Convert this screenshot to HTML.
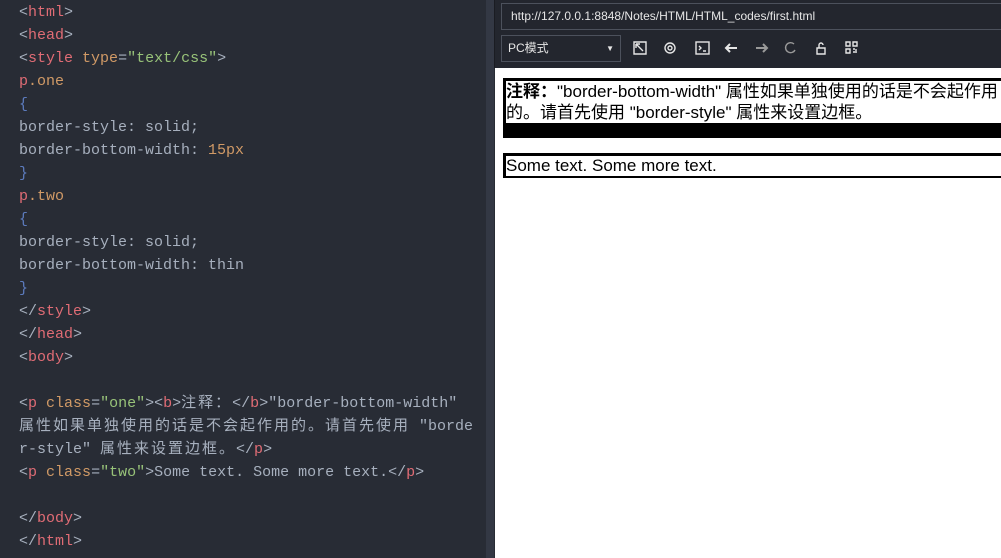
<!DOCTYPE html>
<html><head><meta charset="utf-8"><style>
*{margin:0;padding:0;box-sizing:border-box}
body{width:1001px;height:558px;overflow:hidden;background:#282c34;position:relative;font-family:"Liberation Sans","Noto Sans CJK SC",sans-serif}
#ed{position:absolute;left:0;top:0;width:486px;height:558px;background:#282c35}
.code{position:absolute;left:19px;top:1px;font-family:"Liberation Mono","Noto Sans CJK SC",monospace;font-size:15px;line-height:23px;color:#a7b0be;white-space:pre}
.t{color:#e06c75}.a{color:#d19a66}.s{color:#98c379}.b{color:#5c7bbd}.g{color:#a7b0be}
.c{letter-spacing:2px}
#sb{position:absolute;left:486px;top:0;width:8px;height:558px;background:#333844}
#rt{position:absolute;left:494px;top:0;width:507px;height:68px;background:#23262e;border-left:1px solid #1a1c22}
.box{position:absolute;border:1px solid #4c515c;color:#e6e6e6;font-size:12px}
#pg{position:absolute;left:495px;top:68px;width:506px;height:490px;background:#fff;color:#000;font-size:17px}
svg{position:absolute}
</style></head><body>
<div id="ed"><div class="code"><span class="g">&lt;</span><span class="t">html</span><span class="g">&gt;</span>
<span class="g">&lt;</span><span class="t">head</span><span class="g">&gt;</span>
<span class="g">&lt;</span><span class="t">style</span> <span class="a">type</span>=<span class="s">"text/css"</span>&gt;
<span class="t">p</span><span class="a">.one</span>
<span class="b">{</span>
border-style: solid;
border-bottom-width: <span class="a">15px</span>
<span class="b">}</span>
<span class="t">p</span><span class="a">.two</span>
<span class="b">{</span>
border-style: solid;
border-bottom-width: thin
<span class="b">}</span>
&lt;/<span class="t">style</span>&gt;
&lt;/<span class="t">head</span>&gt;
&lt;<span class="t">body</span>&gt;

&lt;<span class="t">p</span> <span class="a">class</span>=<span class="s">"one"</span>&gt;&lt;<span class="t">b</span>&gt;<span class="c">注释：</span>&lt;/<span class="t">b</span>&gt;"border-bottom-width"
<span class="c">属性如果单独使用的话是不会起作用的。请首先使用</span> "borde
r-style" <span class="c">属性来设置边框。</span>&lt;/<span class="t">p</span>&gt;
&lt;<span class="t">p</span> <span class="a">class</span>=<span class="s">"two"</span>&gt;Some text. Some more text.&lt;/<span class="t">p</span>&gt;

&lt;/<span class="t">body</span>&gt;
&lt;/<span class="t">html</span>&gt;</div></div>
<div id="sb"></div>
<div id="rt">
<div class="box" style="left:6px;top:3px;width:510px;height:27px;line-height:25px;padding-left:9px">http://127.0.0.1:8848/Notes/HTML/HTML_codes/first.html</div>
<div class="box" style="left:6px;top:35px;width:120px;height:27px;line-height:25px;padding-left:6px">PC模式<span style="position:absolute;right:6px;top:0;font-size:8px">▼</span></div>
<svg style="left:0;top:33px" width="507" height="30" viewBox="0 0 507 30" fill="none" stroke="#e6e6e6" stroke-width="1.4">
<path d="M139 9h12v12h-12zM141 11l7 7M141 11h4M141 11v4"/>
<circle cx="175" cy="15" r="2"/><circle cx="175" cy="15" r="5"/>
<rect x="201" y="9" width="13" height="12"/><path d="M204 13l2 2-2 2M208 18h3"/>
<path d="M231 15h11M235 11l-4 4 4 4" stroke-width="2"/>
<path d="M261 15h11M268 11l4 4-4 4" stroke="#999" stroke-width="2"/>
<path d="M299 11a5 5 0 1 0 1 6" stroke="#999"/>
<path d="M322 15h8v6h-8zM324 15v-3a2 2 0 0 1 4 0" />
<path d="M351 9h4v4h-4zM358 9h4v4h-4zM351 16h4v4h-4zM358 16h2M358 19h4M361 16v2"/>
</svg>
</div>
<div id="pg">
<div style="position:absolute;left:8px;top:10px;width:510px;border:3px solid #000;border-bottom-width:15px;line-height:21px;padding-right:8px"><b>注释：</b>"border-bottom-width" 属性如果单独使用的话是不会起作用的。请首先使用 "border-style" 属性来设置边框。</div>
<div style="position:absolute;left:8px;top:85px;width:510px;border:3px solid #000;border-bottom-width:2px;line-height:20px">Some text. Some more text.</div>
</div>
</body></html>
